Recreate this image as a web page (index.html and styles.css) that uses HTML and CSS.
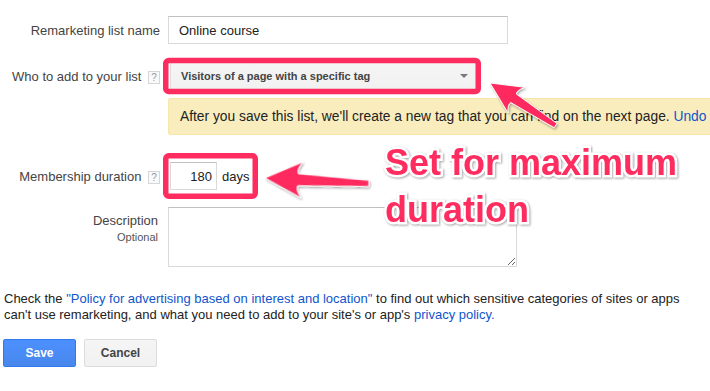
FILE: index.html
```html
<!DOCTYPE html>
<html lang="en">
<head>
  <meta charset="UTF-8" />
  <title>New remarketing list</title>
  <link rel="stylesheet" href="styles.css">
</head>
<body>

  <div class="form">
    <div class="field row-name">
      <div class="field-label">Remarketing list name</div>
      <div class="field-control">
        <input class="text-input name-input" type="text" value="Online course">
      </div>
    </div>

    <div class="field row-who">
      <div class="field-label">Who to add to your list <span class="help">?</span></div>
      <div class="field-control">
        <div class="select">
          <span>Visitors of a page with a specific tag</span>
          <span class="select-arrow"></span>
        </div>
      </div>
    </div>

    <div class="field row-notice">
      <div></div>
      <div class="notice">After you save this list, we'll create a new tag that you can find on the next page. <a href="#">Undo</a></div>
    </div>

    <div class="field row-duration">
      <div class="field-label">Membership duration <span class="help">?</span></div>
      <div class="field-control">
        <input class="text-input days-input" type="text" value="180">
        <span class="days">days</span>
      </div>
    </div>

    <div class="field row-desc">
      <div class="field-label label-top">
        Description
        <small>Optional</small>
      </div>
      <div class="field-control">
        <textarea class="desc-input"></textarea>
      </div>
    </div>
  </div>

  <p class="policy">
    <span>Check the <a href="#">"Policy for advertising based on interest and location"</a> to find out which sensitive categories of sites or apps</span><br>
    <span>can't use remarketing, and what you need to add to your site's or app's <a href="#">privacy policy.</a></span>
  </p>

  <div class="buttons">
    <button class="btn btn-save">Save</button>
    <button class="btn btn-cancel">Cancel</button>
  </div>

  <!-- annotations drawn on top of the screenshot -->
  <div class="annotations">
    <svg width="710" height="391" viewBox="0 0 710 391">
      <defs>
        <filter id="shadow" x="-20%" y="-20%" width="140%" height="140%">
          <feDropShadow dx="1" dy="1.5" stdDeviation="1.2" flood-color="#000" flood-opacity="0.35"/>
        </filter>
      </defs>
      <rect class="mark" x="165.75" y="60.5" width="312.5" height="31" rx="3"/>
      <rect class="mark" x="165.75" y="155.75" width="89.5" height="40.5" rx="3"/>
      <g filter="url(#shadow)">
        <path class="arrow" transform="translate(490 83) rotate(33) scale(0.85)"
              d="M0,0 L37,-18 Q31,-10 33,-6 L92,-3 L92,3 L33,6 Q31,10 37,18 Z"/>
        <path class="arrow" transform="translate(265 178) rotate(3)"
              d="M0,0 L37,-18 Q31,-10 33,-6 L104,-3 L104,3 L33,6 Q31,10 37,18 Z"/>
      </g>
    </svg>
    <div class="callout">Set for maximum<br>duration</div>
  </div>

</body>
</html>
```

FILE: styles.css
```css
body {
  margin: 0;
  font-family: "Liberation Sans", Arial, sans-serif;
  font-size: 13px;
  color: #222;
  background: #fff;
  width: 710px;
  height: 391px;
  position: relative;
  overflow: hidden;
}
a {
  color: #15c;
  text-decoration: none;
}
.field {
  display: grid;
  grid-template-columns: 160px 1fr;
  column-gap: 8px;
  align-items: center;
}
.field-label {
  text-align: right;
  color: #444;
  white-space: nowrap;
}
.field-control {
  display: flex;
  align-items: center;
}
.help {
  display: inline-block;
  width: 10px;
  height: 11px;
  line-height: 11px;
  margin-left: 3px;
  border: 1px solid #d6d6d6;
  background: #fafafa;
  color: #999;
  font-size: 10px;
  text-align: center;
  vertical-align: 0;
}
.text-input {
  box-sizing: border-box;
  height: 28px;
  border: 1px solid #d9d9d9;
  border-top-color: #c0c0c0;
  font-family: inherit;
  font-size: 13px;
  color: #222;
  padding: 0 10px;
  margin: 0;
}
.row-name {
  margin-top: 16px;
}
.name-input {
  width: 340px;
}
.row-who {
  margin-top: 18px;
}
.select {
  box-sizing: border-box;
  margin-left: 2px;
  width: 307px;
  height: 28px;
  display: flex;
  align-items: center;
  justify-content: space-between;
  padding: 0 8px 0 10px;
  background: linear-gradient(#f5f5f5, #f1f1f1);
  border: 1px solid #dcdcdc;
  border-radius: 2px;
  font-weight: bold;
  font-size: 11px;
  color: #444;
}
.select-arrow {
  width: 0;
  height: 0;
  border-left: 4px solid transparent;
  border-right: 4px solid transparent;
  border-top: 4px solid #777;
}
.row-notice {
  margin-top: 8px;
}
.notice {
  box-sizing: border-box;
  height: 37px;
  margin-right: -10px;
  padding: 0 11px;
  line-height: 35px;
  background: #f9edbe;
  border: 1px solid #f6e6ac;
  border-radius: 2px;
  font-size: 13.8px;
  color: #222;
  white-space: nowrap;
}
.row-duration {
  margin-top: 27px;
}
.days-input {
  margin-left: 2px;
  width: 47px;
  text-align: right;
  padding: 0 4px;
}
.days {
  margin-left: 5px;
  color: #222;
}
.row-desc {
  margin-top: 17px;
  align-items: start;
}
.label-top {
  padding-top: 7px;
  padding-right: 2px;
  line-height: 14px;
}
.label-top small {
  display: block;
  margin-top: 2px;
  font-size: 11px;
  color: #555;
}
.desc-input {
  box-sizing: border-box;
  width: 349px;
  height: 60px;
  margin: 0;
  border: 1px solid #d9d9d9;
  border-top-color: #c0c0c0;
  font-family: inherit;
  resize: both;
}
.policy {
  margin: 24px 0 0 4px;
  line-height: 16px;
  color: #222;
  white-space: nowrap;
}
.buttons {
  margin: 16px 0 0 3px;
  display: flex;
  gap: 8px;
}
.btn {
  box-sizing: border-box;
  width: 73px;
  height: 28px;
  border-radius: 2px;
  font-family: inherit;
  font-weight: bold;
  font-size: 12px;
  padding: 0;
}
.btn-save {
  background: linear-gradient(#4d90fe, #4787ed);
  border: 1px solid #3079ed;
  color: #fff;
}
.btn-cancel {
  background: linear-gradient(#f5f5f5, #f1f1f1);
  border: 1px solid #dcdcdc;
  color: #444;
}

/* annotation layer */
.annotations {
  position: absolute;
  left: 0;
  top: 0;
  width: 710px;
  height: 391px;
  pointer-events: none;
}
.annotations svg {
  position: absolute;
  left: 0;
  top: 0;
}
.mark {
  fill: none;
  stroke: #fe2c5f;
  stroke-width: 5.5;
}
.arrow {
  fill: #fe2c5f;
  stroke: #fff;
  stroke-width: 1;
  stroke-linejoin: round;
}
.callout {
  position: absolute;
  left: 385px;
  top: 139px;
  font-weight: bold;
  font-size: 36px;
  line-height: 47px;
  color: #fe2c5f;
  -webkit-text-stroke: 5px #fff;
  paint-order: stroke fill;
  filter: drop-shadow(1px 1.5px 1.2px rgba(0, 0, 0, 0.35));
  white-space: nowrap;
}
```
